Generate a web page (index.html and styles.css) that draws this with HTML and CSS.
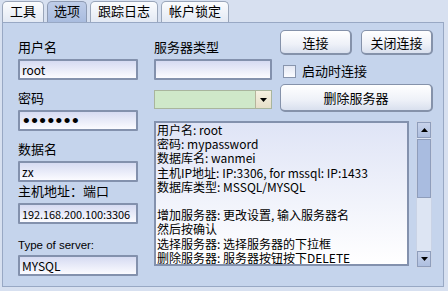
FILE: index.html
```html
<!DOCTYPE html>
<html lang="zh">

<head>
    <meta charset="UTF-8">
    <title>选项</title>
    <link rel="stylesheet" href="styles.css">
</head>

<body>

    <!-- tabs -->
    <div class="tabs">
        <div class="tab">工具</div>
        <div class="tab active">选项</div>
        <div class="tab">跟踪日志</div>
        <div class="tab">帐户锁定</div>
    </div>

    <div class="panel">
        <!-- left column -->
        <div class="col-left">
            <div class="field first">
                <label>用户名</label>
                <input type="text" value="root">
            </div>
            <div class="field">
                <label>密码</label>
                <input type="password" value="xxxxxxx" class="pwd">
            </div>
            <div class="field">
                <label>数据名</label>
                <input type="text" value="zx">
            </div>
            <div class="field tight">
                <label>主机地址：端口</label>
                <input type="text" value="192.168.200.100:3306" class="ip">
            </div>
            <div class="field wide">
                <label class="latin">Type of server:</label>
                <input type="text" value="MYSQL">
            </div>
        </div>

        <!-- right area -->
        <div class="col-right">
            <div class="top-row">
                <div class="col-mid">
                    <label>服务器类型</label>
                    <input type="text" value="">
                    <div class="combo">
                        <span class="combo-btn">
                            <svg width="7" height="4" viewBox="0 0 7 4"><path d="M0 0h7L3.5 4z" fill="#000"/></svg>
                        </span>
                    </div>
                </div>
                <div class="col-btns">
                    <div class="btn-row">
                        <button class="btn">连接</button>
                        <button class="btn">关闭连接</button>
                    </div>
                    <div class="check-row">
                        <span class="check"></span>
                        <span>启动时连接</span>
                    </div>
                    <button class="btn btn-wide">删除服务器</button>
                </div>
            </div>

            <div class="memo-wrap">
                <div class="memo">
                    <p>用户名: root</p>
                    <p>密码: mypassword</p>
                    <p>数据库名: wanmei</p>
                    <p>主机IP地址: IP:3306, for mssql: IP:1433</p>
                    <p>数据库类型: MSSQL/MYSQL</p>
                    <p>&nbsp;</p>
                    <p>增加服务器: 更改设置, 输入服务器名<br>然后按确认</p>
                    <p>选择服务器: 选择服务器的下拉框</p>
                    <p>删除服务器: 服务器按钮按下DELETE</p>
                </div>
                <div class="scrollbar">
                    <span class="arrow">
                        <svg width="7" height="4" viewBox="0 0 7 4"><path d="M0 4h7L3.5 0z" fill="#000"/></svg>
                    </span>
                    <div class="track">
                        <div class="thumb"></div>
                    </div>
                    <span class="arrow">
                        <svg width="7" height="4" viewBox="0 0 7 4"><path d="M0 0h7L3.5 4z" fill="#000"/></svg>
                    </span>
                </div>
            </div>
        </div>
    </div>

</body>

</html>
```

FILE: styles.css
```css
body {
    margin: 0;
    width: 448px;
    height: 291px;
    background-color: #d7e0f0;
    font-family: "Liberation Sans", "Noto Sans CJK SC", sans-serif;
    font-size: 12px;
    color: #000;
    overflow: hidden;
}

/* tabs */
.tabs {
    display: flex;
    gap: 3px;
    padding-left: 2px;
    height: 22px;
    align-items: flex-end;
}

.tab {
    height: 21px;
    box-sizing: border-box;
    padding: 0 7px;
    border: 1px solid #9aa6ba;
    border-bottom: none;
    border-radius: 5px 5px 0 0;
    background: linear-gradient(#fbfcfe, #e3e9f4);
    font-size: 13px;
    line-height: 20px;
}

.tab.active {
    background: linear-gradient(#bfcde8, #a9bcdf);
    border-color: #8e9bb3;
    padding: 0 6px;
}

.panel {
    display: flex;
    margin-left: 2px;
    width: 442px;
    height: 265px;
    box-sizing: border-box;
    border: 1px solid #98a8c4;
    background-color: #c5d4ec;
    padding-left: 15px;
}

/* left column */
.col-left {
    width: 120px;
}

label {
    display: block;
    font-size: 13px;
    line-height: 16px;
    margin-bottom: 3px;
}

label.latin {
    font-size: 11.5px;
    margin-bottom: 2px;
}

input {
    display: block;
    box-sizing: border-box;
    width: 120px;
    height: 21px;
    margin: 0;
    padding: 0 0 0 2px;
    border: 2px solid #8391ad;
    border-radius: 1px;
    background: linear-gradient(#d6dbf2, #fbfbff);
    font-family: "Noto Sans CJK SC", "Liberation Sans", sans-serif;
    font-size: 12px;
    color: #000;
}

input.ip {
    font-size: 11px;
    letter-spacing: -0.1px;
}

input.pwd {
    font-family: "Liberation Sans", sans-serif;
    font-size: 19px;
    letter-spacing: 1.5px;
    padding-left: 3px;
}

.field {
    margin-top: 11px;
}

.field.first {
    margin-top: 17px;
}

.field.tight {
    margin-top: 2px;
}

.field.wide {
    margin-top: 13px;
}

/* right area */
.col-right {
    margin-left: 16px;
}

.top-row {
    display: flex;
    gap: 8px;
}

.col-mid {
    width: 118px;
    padding-top: 17px;
}

.col-mid input {
    width: 118px;
}

.combo {
    position: relative;
    margin-top: 10px;
    height: 19px;
    box-sizing: border-box;
    border: 1px solid #a9b59d;
    background-color: #cfe8c9;
}

.combo-btn {
    position: absolute;
    right: 0;
    top: 0;
    width: 16px;
    height: 17px;
    box-sizing: border-box;
    border-left: 1px solid #b6b49c;
    background: linear-gradient(#f6f1e2, #e6dfc8);
    display: flex;
    align-items: center;
    justify-content: center;
}

.col-btns {
    width: 153px;
    padding-top: 7px;
}

.btn-row {
    display: flex;
    gap: 9px;
}

.btn {
    width: 72px;
    height: 25px;
    border: 1px solid #8592aa;
    border-bottom-width: 2px;
    border-right-width: 2px;
    border-radius: 5px;
    background: linear-gradient(#ffffff, #eef1f8 60%, #d9e0ee);
    font-family: "Liberation Sans", "Noto Sans CJK SC", sans-serif;
    font-size: 13px;
    color: #000;
    padding: 0;
}

.btn-wide {
    display: block;
    width: 153px;
    height: 28px;
    margin-top: 5px;
}

.check-row {
    display: flex;
    align-items: center;
    gap: 6px;
    margin-top: 9px;
    margin-left: 3px;
    font-size: 13px;
    line-height: 15px;
}

.check {
    width: 13px;
    height: 13px;
    box-sizing: border-box;
    border: 1px solid #8895ad;
    background: linear-gradient(#e4e8f4, #fbfcff);
}

/* memo */
.memo-wrap {
    display: flex;
    gap: 7px;
    margin-top: 9px;
}

.memo {
    width: 255px;
    height: 145px;
    box-sizing: border-box;
    border: 2px solid #8391ad;
    background: linear-gradient(#dfe4f6, #ffffff);
    padding: 0 3px 0 1px;
    font-family: "Noto Sans CJK SC", "Liberation Sans", sans-serif;
    font-size: 12px;
    line-height: 14.2px;
    overflow: hidden;
}

.memo p {
    margin: 0;
}

.scrollbar {
    width: 16px;
    height: 147px;
    display: flex;
    flex-direction: column;
    background-color: #dde5f3;
    box-sizing: border-box;
    border: 1px solid #c9d3e6;
}

.arrow {
    height: 14px;
    flex: none;
    display: flex;
    align-items: center;
    justify-content: center;
    background: linear-gradient(#c8d3ea, #aebfe0);
    border: 1px solid #8e9dbb;
}

.track {
    flex: 1;
    padding-top: 1px;
}

.thumb {
    height: 59px;
    box-sizing: border-box;
    border: 1px solid #8e9dbb;
    background-color: #a9bce0;
}
```
